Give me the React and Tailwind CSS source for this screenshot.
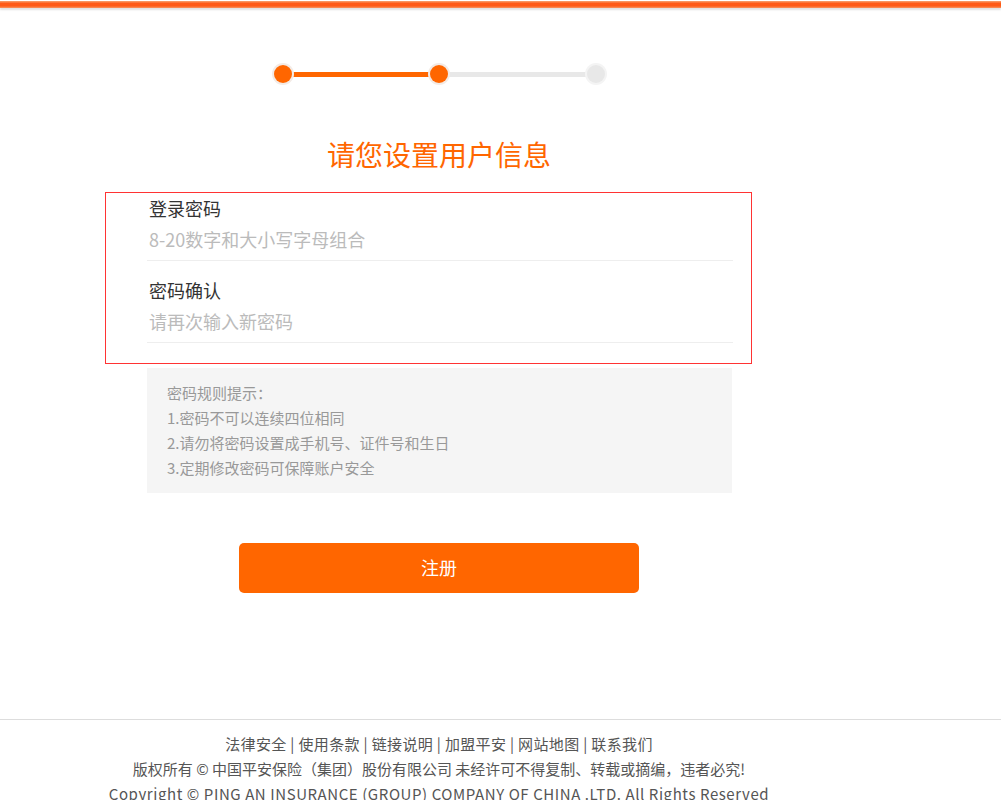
export default function App() {
  const dotOn = "w-[18px] h-[18px] rounded-full bg-[#ff6600] shadow-[0_0_0_2px_#f3ebe6] shrink-0 z-10";
  const dotOff = "w-[18px] h-[18px] rounded-full bg-[#e8e8e8] shadow-[0_0_0_2px_#f4f4f4] shrink-0 z-10";
  return (
    <div className="min-h-screen bg-white font-['Noto_Sans_CJK_SC','Microsoft_YaHei',sans-serif] text-[#333]">
      <div className="pt-[1px]">
        <div className="h-[7px] bg-[linear-gradient(to_bottom,#f6a472,#ff5a16_35%,#ff5a16_70%,#f8955f)] shadow-[0_2px_2px_rgba(0,0,0,0.12)]" />
      </div>

      <div className="w-[878px]">
        <div className="mt-[57px] flex justify-center">
          <div className="w-[331px] flex items-center">
            <div className={dotOn} />
            <div className="flex-1 h-[5px] bg-[#ff6600] -mx-[2px]" />
            <div className={dotOn} />
            <div className="flex-1 h-[5px] bg-[#e8e8e8] -mx-[2px]" />
            <div className={dotOff} />
          </div>
        </div>

        <h1 className="mt-[54px] text-center text-[28px] leading-[34px] pb-[2px] text-[#ff6600]">请您设置用户信息</h1>

        <div className="mt-[19px] ml-[105px] w-[647px] border border-[#f33] pl-[41px] pr-[18px] pt-[5px] pb-[20px]">
          <div>
            <div className="h-[24px] leading-[20px] pl-[2px] text-[18px] text-[#333]">登录密码</div>
            <div className="h-[38px] leading-[34px] pl-[2px] text-[18px] text-[#bbb] border-b border-[#eee] box-content">8-20数字和大小写字母组合</div>
          </div>
          <div className="mt-[19px]">
            <div className="h-[24px] leading-[20px] pl-[2px] text-[18px] text-[#333]">密码确认</div>
            <div className="h-[38px] leading-[34px] pl-[2px] text-[18px] text-[#bbb] border-b border-[#eee] box-content">请再次输入新密码</div>
          </div>
        </div>

        <div className="mt-[4px] ml-[147px] w-[585px] bg-[#f5f5f5] pl-[20px] pt-[12px] pb-[13px] text-[15px] leading-[25px] text-[#999]">
          <div>密码规则提示：</div>
          <div>1.密码不可以连续四位相同</div>
          <div>2.请勿将密码设置成手机号、证件号和生日</div>
          <div>3.定期修改密码可保障账户安全</div>
        </div>

        <div className="mt-[50px] flex justify-center">
          <button className="w-[400px] h-[50px] rounded-[5px] bg-[#ff6600] text-white text-[18px] leading-[48px] pb-[2px]">注册</button>
        </div>
      </div>

      <footer className="mt-[126px] border-t border-[#ddd]">
        <div className="w-[878px] pt-[11px] text-center text-[15px] leading-[25px] text-[#555]">
          <div className="tracking-[0.35px]">法律安全 | 使用条款 | 链接说明 | 加盟平安 | 网站地图 | 联系我们</div>
          <div>版权所有 © 中国平安保险（集团）股份有限公司 未经许可不得复制、转载或摘编，违者必究!</div>
          <div className="tracking-[0.58px]">Copyright © PING AN INSURANCE (GROUP) COMPANY OF CHINA .LTD. All Rights Reserved</div>
        </div>
      </footer>
    </div>
  );
}
